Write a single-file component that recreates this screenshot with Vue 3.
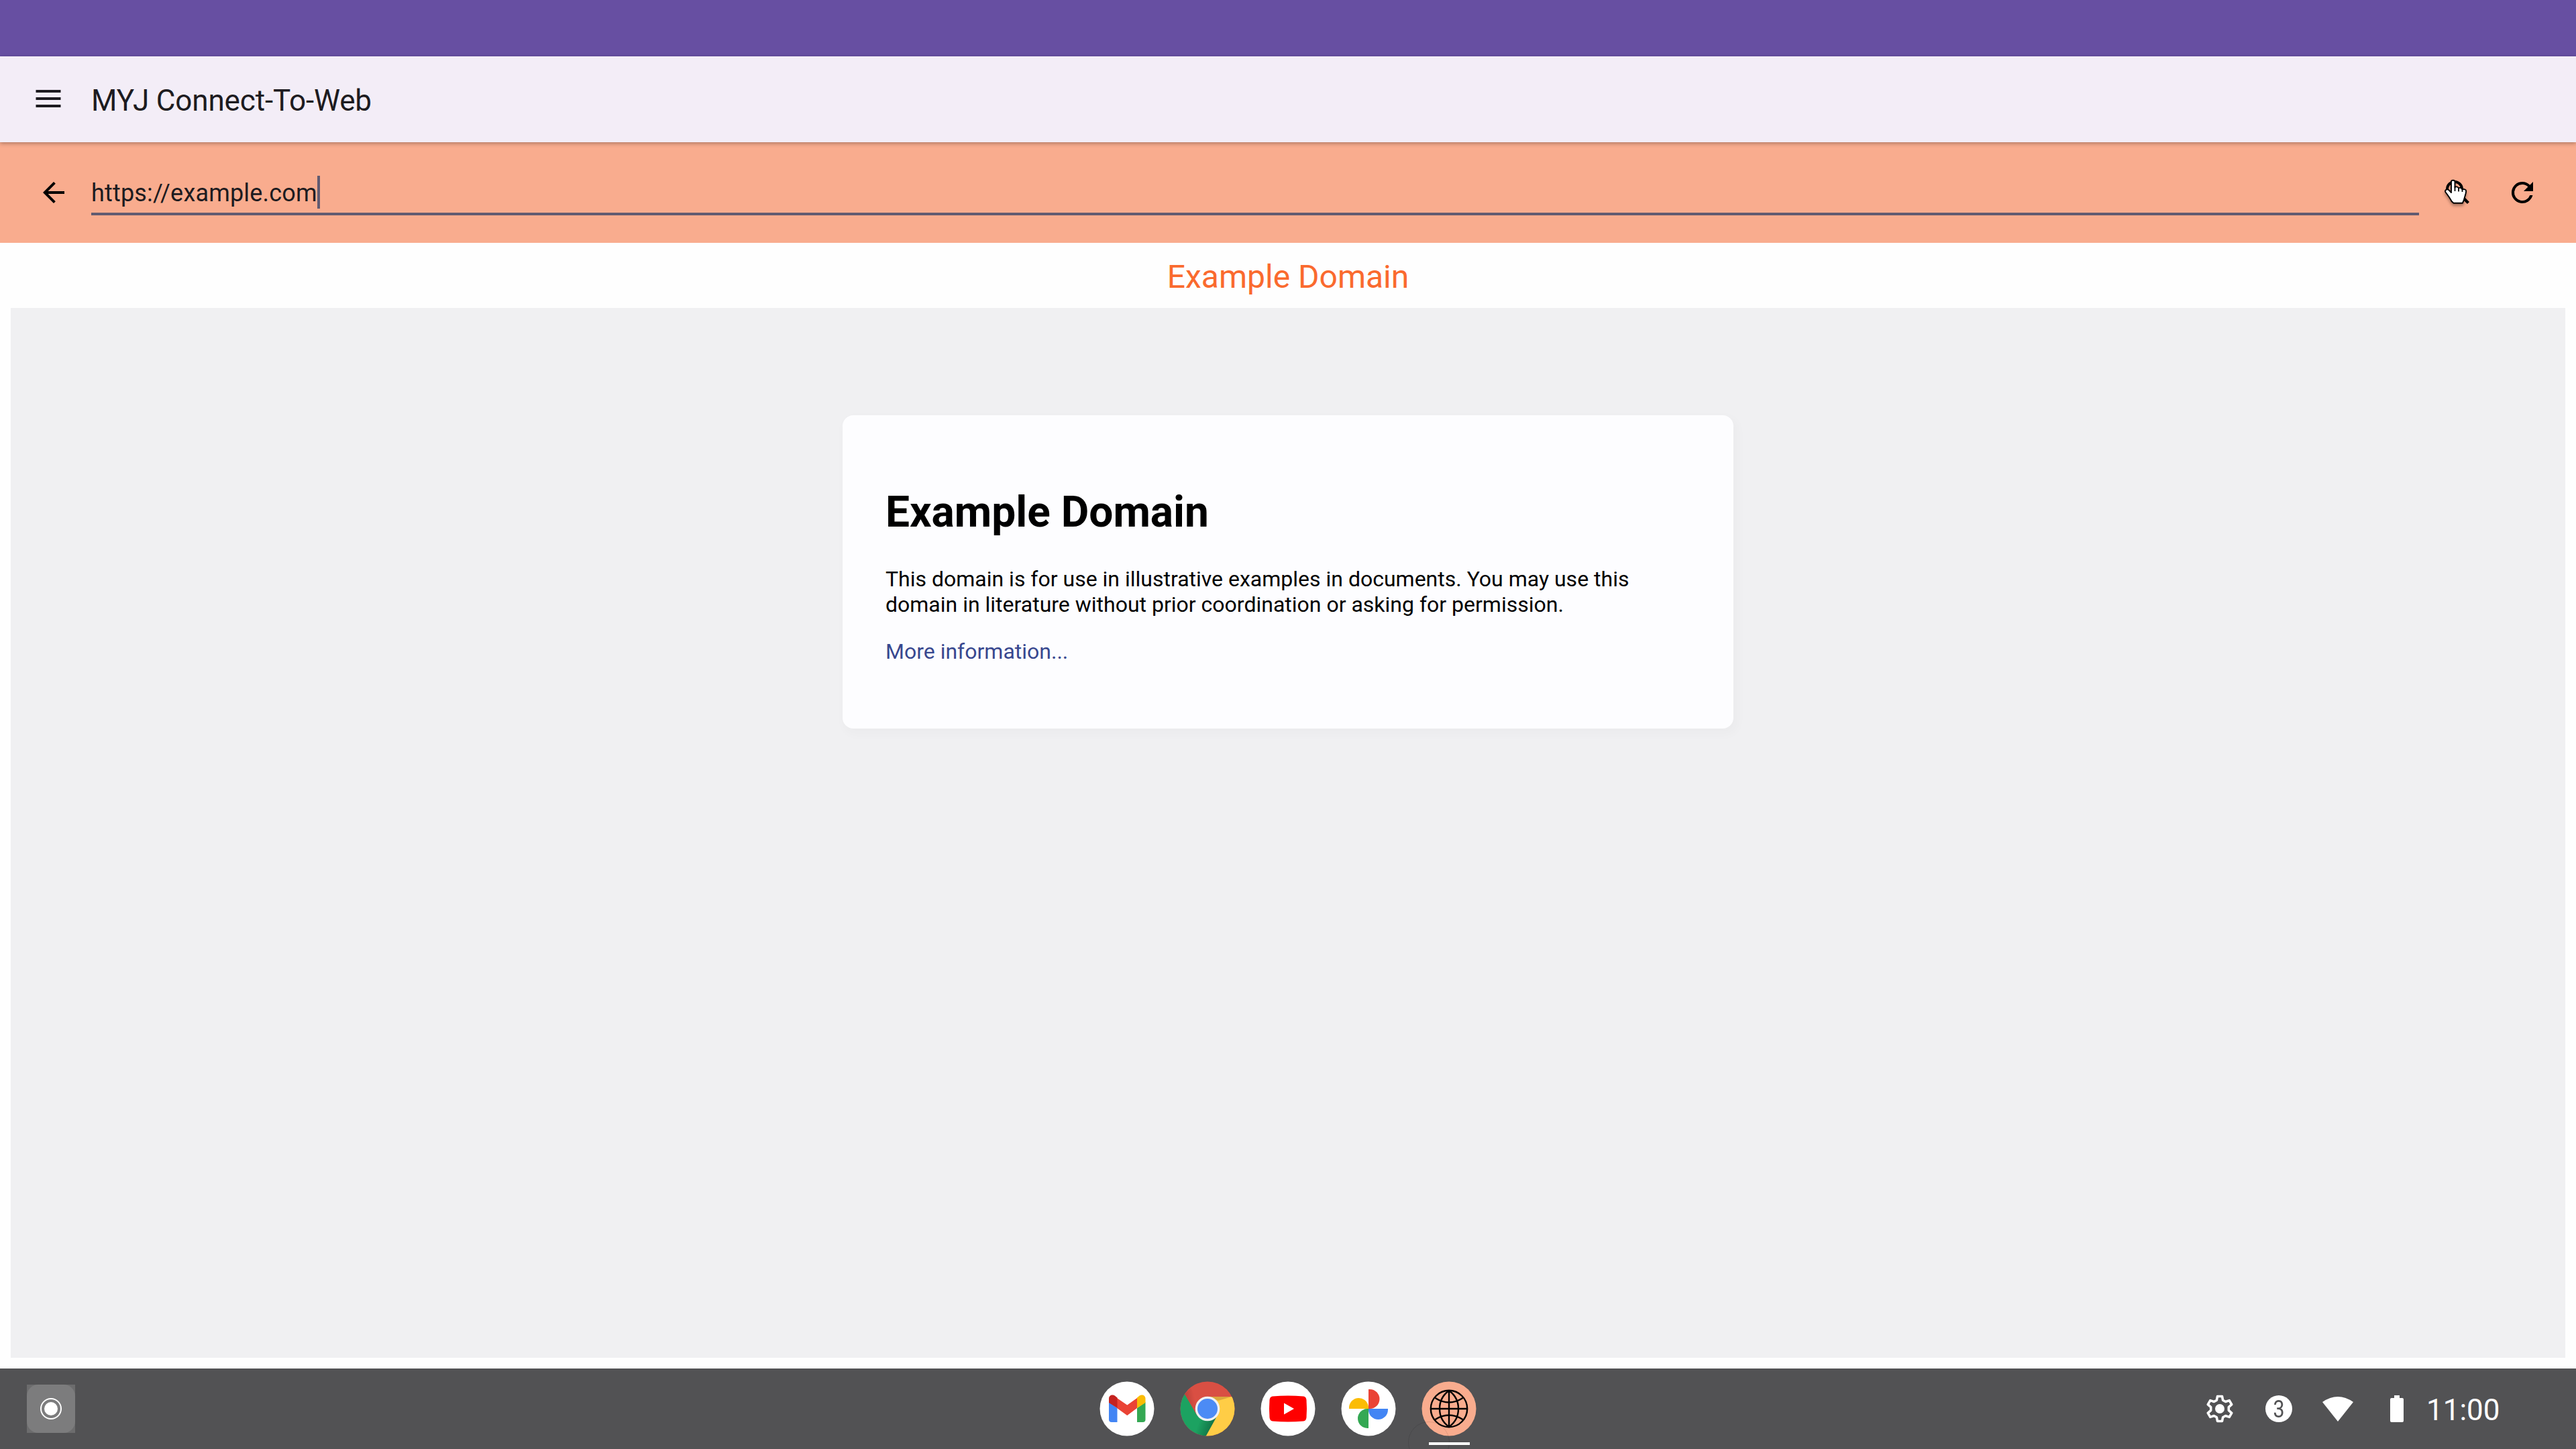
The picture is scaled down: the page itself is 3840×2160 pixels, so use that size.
<script setup>
const url = 'https://example.com'
const title = 'Example Domain'
</script>

<template>
  <div class="screen">
    <div class="caption"></div>
    <header class="appbar">
      <svg class="menu" viewBox="0 0 48 48"><path d="M5.500 10h37v4h-37zM5.500 21h37v4h-37zM5.500 32h37v4h-37z" fill="#1d1b20" /></svg>
      <span class="app-title">MYJ Connect-To-Web</span>
    </header>
    <div class="urlbar">
      <svg class="back" viewBox="0 0 24 24"><path d="M20 11H7.830l5.590-5.590L12 4l-8 8 8 8 1.410-1.410L7.830 13H20v-2z" /></svg>
      <div class="field"><span class="url">{{ url }}</span><i class="caret"></i></div>
      <div class="search">
        <svg class="icon" viewBox="0 0 24 24"><path d="M15.5 14h-.79l-.28-.27A6.471 6.471 0 0 0 16 9.500A6.500 6.500 0 1 0 9.500 16c1.610 0 3.090-.59 4.230-1.570l.27.28v.79l5 4.990L20.490 19l-4.990-5zm-6 0C7.010 14 5 11.990 5 9.500S7.010 5 9.500 5 14 7.010 14 9.500 11.990 14 9.500 14z" /></svg>
        <svg class="hand" viewBox="0 0 40 44">
          <path d="M11 5C11 2 16.500 2 16.500 5V13C17.500 12 21 12 22 14.500C23.500 13.300 27 14 27.500 16.500C29.500 15.500 33.500 16.500 33.200 19C33 24 30.500 28 30 32L27.800 36.800H14.500L11.500 34C9 29 6 25 2.500 20.500C1 17 4.500 15.500 7 16.800L11 21Z" fill="#fff" stroke="#000" stroke-width="1.900" stroke-linejoin="round" />
          <path d="M16.500 12v7M22 14v5.500M27.500 16v4" stroke="#000" stroke-width="1.800" fill="none" />
        </svg>
      </div>
      <svg class="icon reload" viewBox="0 0 24 24"><path d="M17.650 6.350A7.958 7.958 0 0 0 12 4a8 8 0 1 0 7.730 10h-2.080A6 6 0 1 1 12 6c1.660 0 3.140.69 4.220 1.780L13 11h7V4l-2.350 2.350z" /></svg>
    </div>
    <div class="page-title">{{ title }}</div>
    <main class="web">
      <article class="card">
        <h1>{{ title }}</h1>
        <p>This domain is for use in illustrative examples in documents. You may use this domain in literature without prior coordination or asking for permission.</p>
        <p><a>More information...</a></p>
      </article>
    </main>
    <footer class="shelf">
      <div class="launcher">
        <svg viewBox="0 0 72 72"><rect width="72" height="72" rx="17" fill="#7c7c7d" /><circle cx="36" cy="36" r="15" fill="none" stroke="#fff" stroke-width="2" /><circle cx="36" cy="36" r="10" fill="#fff" /></svg>
      </div>
      <div class="apps">
        <svg viewBox="0 0 82 82">
          <circle cx="41" cy="41" r="40.500" fill="#fff" />
          <path d="M14 31l12.500 9v21H18a4 4 0 0 1-4-4z" fill="#4285f4" />
          <path d="M68.500 31L56 40v21h8.500a4 4 0 0 0 4-4z" fill="#34a853" />
          <path d="M26 25l15.300 10.500L56 25v15L41.300 51 26 40z" fill="#ea4335" />
          <path d="M14 32v-6c0-5.500 6-7 10-3.500l2.500 2V40z" fill="#c5221f" />
          <path d="M68.500 32v-6c0-5.500-6-7-10-3.500l-2.500 2V40z" fill="#fbbc04" />
        </svg>
        <svg viewBox="0 0 82 82">
          <defs>
            <linearGradient id="cr" x1="0" y1="0.500" x2="1" y2="0.200"><stop offset="0.080" stop-color="#b9433a" /><stop offset="0.700" stop-color="#db4f43" /></linearGradient>
            <linearGradient id="cg" x1="0" y1="0" x2="1" y2="0.500"><stop offset="0.700" stop-color="#1ca261" /><stop offset="1" stop-color="#12794a" /></linearGradient>
            <clipPath id="cc"><circle cx="41" cy="41" r="40.500" /></clipPath>
          </defs>
          <g clip-path="url(#cc)">
            <rect width="82" height="82" fill="#d94f43" />
            <path d="M41 23H82V82H38L56 50Z" fill="#ffcd46" />
            <path d="M41 23H77L57 29Z" fill="#dba83d" />
            <path d="M7 19L25 50 41 59 54 54 38.500 82H0V10Z" fill="url(#cg)" />
            <path d="M7 19L25 50L23 42L28 30L16 10Z" fill="url(#cr)" />
          </g>
          <circle cx="41" cy="41" r="18.300" fill="#f1f1f1" /><circle cx="41" cy="41" r="15" fill="#4c8bf5" />
        </svg>
        <svg viewBox="0 0 82 82">
          <circle cx="41" cy="41" r="40.500" fill="#fff" />
          <path d="M18 22.500Q41 20.500 64 22.500Q68 23 68.500 28Q69.500 41 68.500 54Q68 59 64 59.500Q41 61.500 18 59.500Q14 59 13.500 54Q12.500 41 13.500 28Q14 23 18 22.500Z" fill="#f00" />
          <path d="M35 32.500L50 41 35 49.500Z" fill="#fff" />
        </svg>
        <svg viewBox="0 0 82 82">
          <circle cx="41" cy="41" r="40.500" fill="#fff" />
          <path d="M41 41V12h2a14.500 14.500 0 0 1 0 29z" fill="#ea4335" />
          <path d="M41 41H12v-1.500a14.500 14.500 0 0 1 29 0z" fill="#fbbc04" />
          <path d="M41 41V70h-1.500a14.500 14.500 0 0 1 0-29z" fill="#34a853" />
          <path d="M41 41H70v1.500a14.500 14.500 0 0 1-29 0z" fill="#4285f4" />
        </svg>
        <div class="active">
          <svg viewBox="0 0 82 82">
            <circle cx="41" cy="41" r="40.500" fill="#f9ac8e" />
            <g fill="none" stroke="#000" stroke-width="2.400"><circle cx="41" cy="41" r="27.200" /><path d="M41 13.500v55M13.500 41h55M41 14Q27 24 27 41T41 68M41 14Q55 24 55 41Q55 58 41 68M41 68Q27 58 27 41M20.500 25Q41 38 61.500 25M20.500 57Q41 44 61.500 57" /></g>
          </svg>
          <i class="ring"></i><i class="underline"></i>
        </div>
      </div>
      <div class="status">
        <svg class="gear" viewBox="0 -1 44 44">
          <path d="M18.500 2.500h7l1.100 5.700 4 2.300 5.600-1.900 3.500 6.100-4.400 4v4.600l4.400 4-3.500 6.100-5.600-1.900-4 2.300-1.100 5.700h-7l-1.100-5.700-4-2.300-5.600 1.900-3.500-6.100 4.400-4v-4.600l-4.400-4 3.500-6.100 5.600 1.900 4-2.300z" fill="none" stroke="#fff" stroke-width="3.600" stroke-linejoin="round" /><circle cx="22" cy="21" r="7" fill="#fff" />
        </svg>
        <div class="count"><span>3</span></div>
        <svg class="wifi" viewBox="0 0 48 40"><path d="M1 10Q24-6 47 10L24 39Z" fill="#fff" /></svg>
        <svg class="battery" viewBox="0 0 20 40"><path d="M6 0h8v4h4a2 2 0 0 1 2 2v32a2 2 0 0 1-2 2H2a2 2 0 0 1-2-2V6a2 2 0 0 1 2-2h4z" fill="#fff" /></svg>
        <span class="clock">11:00</span>
      </div>
    </footer>
  </div>
</template>

<style>
body { margin: 0; background: #fff; }
</style>

<style scoped>
.screen { width: 3840px; height: 2160px; display: flex; flex-direction: column; overflow: hidden; background: #fefefe; font-family: Roboto, sans-serif; }
.screen * { box-sizing: border-box; }
svg { display: block; flex: none; }
.caption { height: 84px; flex: none; background: #674fa2; }
.appbar { height: 128px; flex: none; display: flex; align-items: center; padding-left: 48px; background: #f3edf7; position: relative; box-shadow: 0 2px 6px rgba(0, 0, 0, .3); }
.menu { width: 48px; height: 48px; }
.app-title { margin: 3px 0 0 40px; font-size: 44px; line-height: 52px; letter-spacing: -0.14px; color: #1d1b20; }
.urlbar { height: 150px; flex: none; display: flex; align-items: center; background: #f9ac8e; }
.back { width: 48px; height: 48px; margin-left: 56px; }
.field { width: 3470px; height: 68px; margin: 0 0 0 32px; display: flex; align-items: center; border-bottom: 4px solid #625b71; font-size: 36px; line-height: 42px; color: #1d1b20; }
.url { margin-top: 6px; letter-spacing: 0.18px; }
.caret { width: 4px; height: 49px; margin-top: 2px; background: #625b71; }
.search { position: relative; margin-left: 34px; width: 48px; height: 48px; }
.icon { width: 48px; height: 48px; }
.hand { position: absolute; left: 3px; top: 3px; width: 40px; height: 44px; filter: drop-shadow(0 3px 2px rgba(0, 0, 0, .35)); }
.reload { margin-left: 48px; }
.page-title { height: 97px; flex: none; text-align: center; font-size: 48px; line-height: 101px; color: #fa6a2e; }
.web { width: 3808px; height: 1565px; flex: none; margin: 0 16px 16px; background: #f0f0f2; padding-top: 160px; }
.card { width: 1328px; height: 467px; margin: 0 auto; padding: 64px; border-radius: 16px; background: #fdfdff; box-shadow: 4px 6px 14px 4px rgba(0, 0, 0, .02); font-size: 32px; line-height: 38px; color: #000; }
h1 { margin: 43px 0; font-size: 64px; line-height: 75px; font-weight: 700; }
p { margin: 0 0 32px; }
a { color: #38488f; }
.shelf { height: 120px; flex: none; position: relative; display: flex; align-items: center; justify-content: space-between; padding: 0 112px 0 40px; background: #525254; }
.launcher { width: 72px; height: 72px; background: #6c6c6d; }
.apps { position: absolute; left: 1639px; top: 19px; display: flex; gap: 38px; }
.apps svg { width: 82px; height: 82px; }
.active { position: relative; }
.ring { position: absolute; left: -20px; top: 60px; width: 62px; height: 62px; border: 1px solid rgba(0, 0, 0, .1); border-radius: 50%; }
.underline { position: absolute; left: 11px; top: 91px; width: 61px; height: 4px; background: #fff; }
.status { display: flex; align-items: center; color: #fff; }
.gear { width: 44px; height: 44px; }
.count { width: 40px; height: 40px; margin-left: 46px; border-radius: 50%; background: #fff; color: #525254; font-size: 36px; font-weight: 400; line-height: 43px; text-align: center; }
.count span { display: block; transform: scaleX(.84); }
.wifi { width: 48px; height: 40px; margin-left: 44px; }
.battery { width: 20px; height: 40px; margin-left: 54px; }
.clock { width: 111px; margin: 3px 0 0 34px; font-size: 44px; line-height: 52px; white-space: nowrap; }
</style>
